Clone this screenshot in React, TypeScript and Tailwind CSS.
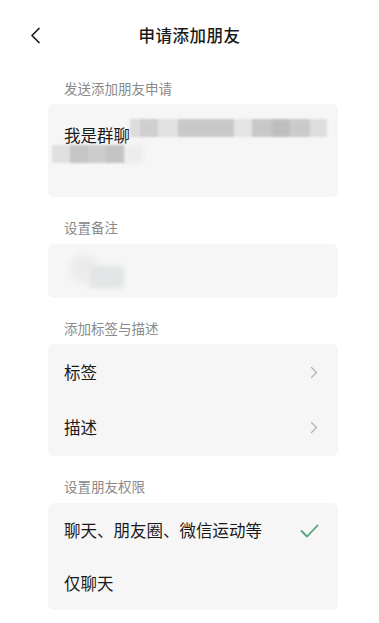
import React from "react";

const font = { fontFamily: '"Noto Sans CJK SC", "Noto Sans", sans-serif' };

function Chevron() {
  return (
    <svg width="8" height="13" viewBox="0 0 8 13" fill="none">
      <path d="M1.5 1.5 L6.5 6.5 L1.5 11.5" stroke="#b3b3b3" strokeWidth="1.3" strokeLinecap="round" strokeLinejoin="round" />
    </svg>
  );
}

function Check() {
  return (
    <svg width="19" height="14" viewBox="0 0 19 14" fill="none">
      <path d="M1.5 7 L7 12.5 L17.5 1.5" stroke="#55a07e" strokeWidth="1.8" strokeLinecap="round" strokeLinejoin="round" />
    </svg>
  );
}

export default function App() {
  return (
    <div className="w-[379px] h-[623px] bg-white overflow-hidden text-[#1a1a1a]" style={font}>
      <div className="relative h-[70px] flex items-center justify-center">
        <svg className="absolute left-[29px] top-[27px]" width="13" height="17" viewBox="0 0 13 17" fill="none">
          <path d="M10 1.5 L3 8.5 L10 15.5" stroke="#1a1a1a" strokeWidth="1.7" strokeLinecap="round" strokeLinejoin="round" />
        </svg>
        <span className="text-[16.5px] font-medium tracking-[0.5px] leading-none">申请添加朋友</span>
      </div>

      <div className="mx-[48px] w-[290px] pt-[8px]">
        <div className="h-[20px] leading-[20px] px-[16px] text-[13.5px] text-[#8a8a8a]">发送添加朋友申请</div>
        <div className="mt-[6px] h-[93px] rounded-[6px] bg-[#f6f6f6] relative overflow-hidden">
          <div className="flex items-center pt-[18px] pl-[16px] h-[44px]">
            <span className="text-[16.5px] leading-[24px]">我是群聊</span>
          </div>
          <div className="absolute left-[82px] top-[15px] h-[18px] w-[197px] flex blur-[1px]">
            <div className="w-[10px] bg-[#dcdcdc]" />
            <div className="w-[18px] bg-[#cfcfcf]" />
            <div className="w-[20px] bg-[#e2e2e2]" />
            <div className="w-[56px] bg-[#c9c9c9]" />
            <div className="w-[18px] bg-[#e4e4e4]" />
            <div className="w-[20px] bg-[#c8c8c8]" />
            <div className="w-[18px] bg-[#bfbfbf]" />
            <div className="w-[20px] bg-[#cbcbcb]" />
            <div className="w-[17px] bg-[#dedede]" />
          </div>
          <div className="absolute left-[4px] top-[41px] h-[18px] w-[73px] flex blur-[1px]">
            <div className="w-[18px] bg-[#e0e0e0]" />
            <div className="w-[18px] bg-[#c6c6c6]" />
            <div className="w-[18px] bg-[#cdcdcd]" />
            <div className="w-[19px] bg-[#c4c4c4]" />
          </div>
          <div className="absolute left-[77px] top-[41px] h-[18px] w-[18px] bg-[#ececec] blur-[2px]" />
        </div>

        <div className="mt-[20px] h-[20px] leading-[20px] px-[16px] text-[13.5px] text-[#8a8a8a]">设置备注</div>
        <div className="mt-[7px] h-[54px] rounded-[6px] bg-[#f6f6f6] relative overflow-hidden">
          <div className="absolute left-[22px] top-[10px] h-[30px] w-[28px] rounded-full bg-[#ececec] blur-[3px]" />
          <div className="absolute left-[42px] top-[22px] h-[22px] w-[34px] bg-[#e3e6e6] blur-[2px]" />
        </div>

        <div className="mt-[20px] h-[20px] leading-[20px] px-[16px] text-[13.5px] text-[#8a8a8a]">添加标签与描述</div>
        <div className="mt-[6px] rounded-[6px] bg-[#f6f6f6] py-[1px]">
          <div className="h-[55px] flex items-center justify-between pl-[16px] pr-[20px]">
            <span className="text-[16.5px]">标签</span>
            <Chevron />
          </div>
          <div className="h-[55px] flex items-center justify-between pl-[16px] pr-[20px]">
            <span className="text-[16.5px]">描述</span>
            <Chevron />
          </div>
        </div>

        <div className="mt-[20px] h-[20px] leading-[20px] px-[16px] text-[13.5px] text-[#8a8a8a]">设置朋友权限</div>
        <div className="mt-[7px] rounded-[6px] bg-[#f6f6f6]">
          <div className="h-[55px] flex items-center justify-between pl-[16px] pr-[19px]">
            <span className="text-[16.5px]">聊天、朋友圈、微信运动等</span>
            <Check />
          </div>
          <div className="h-[52px] flex items-center pl-[16px] pb-[2px]">
            <span className="text-[16.5px]">仅聊天</span>
          </div>
        </div>
      </div>
    </div>
  );
}
